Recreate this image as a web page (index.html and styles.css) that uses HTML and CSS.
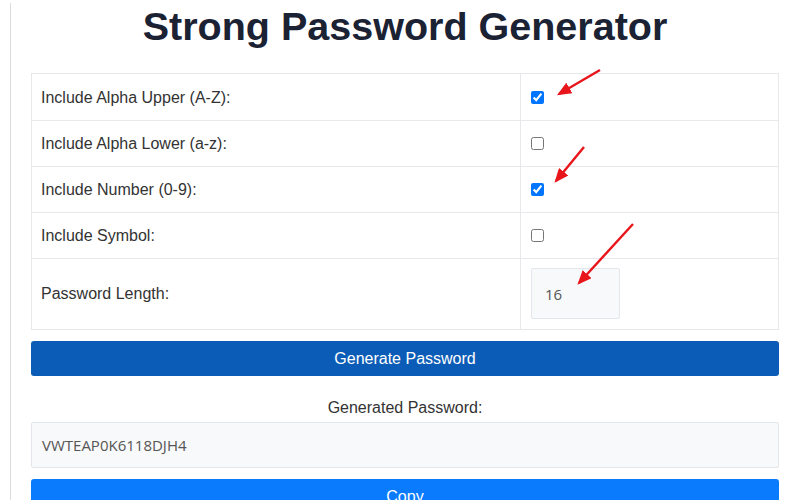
FILE: index.html
```html
<!DOCTYPE html>
<html>
<head>
<meta charset="utf-8">
<link rel="stylesheet" href="styles.css">
</head>
<body>
<div class="page">
  <h1 class="title">Strong Password Generator</h1>
  <table class="options">
    <tr class="first-row"><td class="label">Include Alpha Upper (A-Z):</td><td class="ctl"><input type="checkbox" checked></td></tr>
    <tr><td class="label">Include Alpha Lower (a-z):</td><td class="ctl"><input type="checkbox"></td></tr>
    <tr><td class="label">Include Number (0-9):</td><td class="ctl"><input type="checkbox" checked></td></tr>
    <tr><td class="label">Include Symbol:</td><td class="ctl"><input type="checkbox"></td></tr>
    <tr class="len-row"><td class="label">Password Length:</td><td class="ctl"><input class="len" type="text" value="16"></td></tr>
  </table>
  <button class="btn btn-gen">Generate Password</button>
  <div class="out-label">Generated Password:</div>
  <div class="output">VWTEAP0K6118DJH4</div>
  <button class="btn btn-copy">Copy</button>
  <svg class="arrows" width="800" height="500" viewBox="0 0 800 500">
    <defs>
      <marker id="ah" markerWidth="6" markerHeight="5" refX="5" refY="2.5" orient="auto" markerUnits="strokeWidth">
        <path d="M0,0 L6,2.5 L0,5 Z" fill="#e8161b"/>
      </marker>
    </defs>
    <line x1="600" y1="70" x2="559" y2="94" stroke="#e8161b" stroke-width="2.4" marker-end="url(#ah)"/>
    <line x1="584" y1="147" x2="556" y2="181" stroke="#e8161b" stroke-width="2.4" marker-end="url(#ah)"/>
    <line x1="633" y1="224" x2="579" y2="283" stroke="#e8161b" stroke-width="2.4" marker-end="url(#ah)"/>
  </svg>
</div>
</body>
</html>
```
FILE: styles.css
```css
html, body {
  margin: 0;
  padding: 0;
  background: #fff;
  overflow: hidden;
}
body {
  font-family: "Liberation Sans", Arial, sans-serif;
  color: #333;
}
.page {
  margin-left: 10px;
  border-left: 1px solid #dcdcdc;
  padding: 0 0 0 20px;
  width: 748px;
  min-height: 500px;
}
.title {
  margin: 3px 0 24px 0;
  font-size: 39.5px;
  line-height: 46px;
  font-weight: bold;
  text-align: center;
  color: #1b2233;
}
.options {
  width: 748px;
  border-collapse: collapse;
  border: 1px solid #e6e8eb;
}
.options td {
  border: 1px solid #e6e8eb;
  padding: 14px 10px 14px 9px;
  font-size: 16px;
  line-height: 17px;
  vertical-align: middle;
}
.first-row td {
  padding-top: 15px;
}
.options td.label {
  width: 469px;
}
.options td.ctl {
  padding-left: 10px;
}
.options input[type="checkbox"] {
  margin: 0;
  width: 13px;
  height: 13px;
  display: block;
}
.len-row td {
  padding-top: 9px;
  padding-bottom: 10px;
}
.len {
  display: block;
  box-sizing: border-box;
  width: 89px;
  height: 51px;
  margin: 0;
  padding: 0 13px;
  background: #f8f9fa;
  border: 1px solid #e3e6ea;
  border-radius: 2px;
  font-family: "Open Sans", sans-serif;
  font-size: 15px;
  color: #555;
  outline: none;
}
.btn {
  display: block;
  width: 748px;
  height: 35px;
  margin: 11px 0 0 0;
  border: none;
  border-radius: 3px;
  color: #fff;
  font-family: "Liberation Sans", Arial, sans-serif;
  font-size: 16px;
  text-align: center;
  padding: 0;
}
.btn-gen {
  background: #0b5cb6;
}
.btn-copy {
  background: #0a7bfd;
}
.out-label {
  margin-top: 23px;
  font-size: 16px;
  line-height: 18px;
  text-align: center;
  color: #333;
}
.output {
  box-sizing: border-box;
  margin-top: 5px;
  height: 46px;
  padding: 0 10px;
  background: #f8f9fa;
  border: 1px solid #e3e6ea;
  border-radius: 2px;
  font-family: "Open Sans", sans-serif;
  font-size: 15px;
  line-height: 44px;
  color: #555;
}
.arrows {
  position: absolute;
  left: 0;
  top: 0;
  pointer-events: none;
}
```
